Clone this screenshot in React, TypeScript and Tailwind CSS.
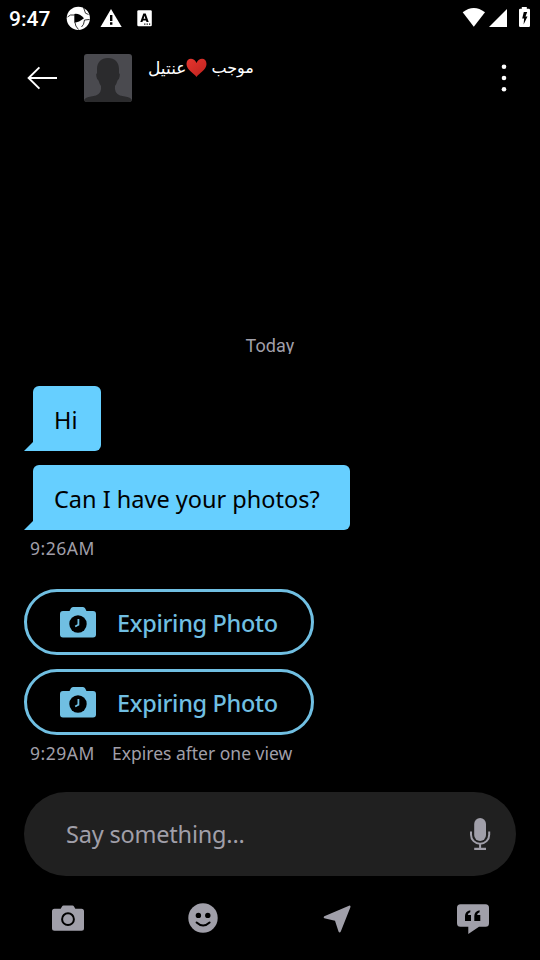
import React from 'react';

const plex = "font-['Noto_Sans','Open_Sans',sans-serif]";

function StatusBar() {
  return (
    <div className="flex h-9 items-center pr-[9px] pl-[9px] font-['Roboto',sans-serif] text-white">
      <span className="w-[57px] pt-px text-[21px] leading-9 font-medium whitespace-nowrap">9:47</span>
      <svg className="h-9 w-[90px]" viewBox="0 0 90 36">
        <circle cx="12.3" cy="18.3" r="11.6" fill="#fff" />
        <g stroke="#000" strokeWidth="0.8" fill="none">
          <path d="M17.500 7.500 L19.500 13.200 L22.500 14.500" />
          <path d="M23.500 19.500 L18.500 20 Q18 25 15.500 27" />
          <path d="M9 22.500 Q9 26 12.500 29.500" />
          <path d="M8.500 15 Q4 14 1.500 17" />
        </g>
        <path d="M8.300 14 Q13 13 18 18.300 Q13 22.500 8.300 22.800 Z" fill="#000" />
        <path d="M45 9 L55.7 27 H34.5 Z" fill="#fff" />
        <path d="M44 15h2.4v6H44zM44 22.3h2.4v2.4H44z" fill="#000" />
        <rect x="71.3" y="10.3" width="14.5" height="16" rx="1.3" fill="#fff" />
        <path d="M77.3 13.5h2.4l3 8.6h-2.2l-.5-1.7h-3l-.6 1.7h-2.1zm.3 5.2h1.800l-.9-3z" fill="#000" fillRule="evenodd" />
        <path d="M78.2 23.5h1.2v1.2h-1.2zM80.6 23.5h1.2v1.2h-1.2zM83 23.5h1.2v1.2H83z" fill="#000" />
      </svg>
      <svg className="ml-auto h-9 w-[70px]" viewBox="0 0 70 36" fill="#fff">
        <path d="M1.7 12.3 Q12.8 3.8 24 12.3 L12.8 26.8 Z" />
        <path d="M46 9 V27 H28 Z" />
        <path fillRule="evenodd" d="M60.8 7h5v1.8h2a1.2 1.2 0 0 1 1.2 1.2v15.800a1.200 1.200 0 0 1-1.200 1.200h-8.600a1.200 1.200 0 0 1-1.200-1.200V10a1.200 1.200 0 0 1 1.200-1.200h1.600zM62.800 12l-1.600 6.500h1.900l-.5 6 3.900-8h-2l1.700-4.500z" />
      </svg>
    </div>
  );
}

function Header() {
  return (
    <header className="flex h-[84px] items-center pr-6 pl-[27px]">
      <svg className="h-6 w-[31px] shrink-0" viewBox="0 0 31 24" fill="none" stroke="#fff" strokeWidth="1.9">
        <path d="M1.6 12 H30 M12.400 1.400 L1.600 12 L12.400 22.600" />
      </svg>
      <svg className="ml-[26px] h-12 w-12 shrink-0 rounded-[3px] bg-[#4a4a4f]" viewBox="0 0 48 48" fill="#2b2b2d">
        <path d="M24 4 C17 4 13 8.500 13 15 V19 Q11.500 20 12.500 23 Q13 26 14.500 26.500 Q15.500 30 17 32 Q18 39 12 41.500 L4.500 43 Q1.500 43.500 0 46 V48 H48 V46 Q46.500 43.500 43.500 43 L36 41.500 Q30 39 31 32 Q32.500 30 33.500 26.500 Q35 26 35.500 23 Q36.500 20 35 19 V15 C35 8.500 31 4 24 4Z" />
      </svg>
      <div className="mb-5 ml-4 flex h-7 items-center font-['DejaVu_Sans',sans-serif] text-[17px] leading-7 text-white" dir="rtl">
        <span className="text-[16px]">موجب</span>
        <svg className="mr-[4px] h-5 w-[21px]" viewBox="0 0 21 20">
          <defs>
            <linearGradient id="heart" x1="0" y1="0" x2="1" y2="1">
              <stop offset="0" stopColor="#e6362f" />
              <stop offset="1" stopColor="#bd211d" />
            </linearGradient>
          </defs>
          <path d="M10.500 19 C8 15 .5 12 .5 6 C.5 -.5 8 -.8 10.500 5 C13 -.8 20.500 -.5 20.500 6 C20.500 12 13 15 10.500 19Z" fill="url(#heart)" />
        </svg>
        <span>عنتيل</span>
      </div>
      <svg className="ml-auto h-[30px] w-6" viewBox="0 0 24 30" fill="#fff">
        <circle cx="12" cy="3.700" r="2.300" />
        <circle cx="12" cy="15" r="2.300" />
        <circle cx="12" cy="26.300" r="2.300" />
      </svg>
    </header>
  );
}

function Bubble({ children, className }: { children: React.ReactNode; className: string }) {
  return (
    <div className="flex h-[65px] items-end">
      <svg className="h-[9px] w-[9px]" viewBox="0 0 9 9">
        <path d="M9 0 V9 H0 Z" fill="#66cfff" />
      </svg>
      <div className={`h-[65px] rounded-[6px] rounded-bl-none bg-[#66cfff] pt-px pl-[21px] text-[23.5px] leading-[66px] whitespace-nowrap text-black ${className}`}>
        {children}
      </div>
    </div>
  );
}

function ExpiringPhoto() {
  return (
    <button className="flex h-[66px] w-[290px] items-center rounded-full border-[3px] border-[#70bfe2] pl-[33px] text-[#70bfe2]">
      <svg className="h-[31px] w-9" viewBox="0 0 36 31">
        <path d="M13 0h10q1.500 0 2.200 1.500L26.500 4H33q3 0 3 3v20.500q0 3-3 3H3q-3 0-3-3V7q0-3 3-3h6.500l1.300-2.500Q11.500 0 13 0z" fill="currentColor" />
        <circle cx="18" cy="17" r="8.700" fill="#000" />
        <path d="M18.400 12v5.700l-3.200 1.800" fill="none" stroke="currentColor" strokeWidth="1.800" />
      </svg>
      <span className="ml-[21px] pt-[2px] text-[23.5px] leading-8 font-medium tracking-[-0.32px] whitespace-nowrap">Expiring Photo</span>
    </button>
  );
}

function Composer() {
  return (
    <div className="mx-6 mt-[22px] flex h-[84px] items-center rounded-full bg-[#202020] pr-6 pl-[42px]">
      <span className="pt-[2px] text-[23.5px] tracking-[-0.2px] text-[#a09fa9]">Say something...</span>
      <svg className="ml-auto h-8 w-6" viewBox="0 0 24 32" fill="#a09fa9">
        <rect x="6.200" y="0" width="11.800" height="23" rx="5.900" />
        <path d="M3 13.500v3.200a9.100 9.100 0 0 0 18.200 0v-3.200" fill="none" stroke="#a09fa9" strokeWidth="2" />
        <path d="M11.100 26h2v4h-2zM6.200 29.700H18V32H6.200z" />
      </svg>
    </div>
  );
}

function Toolbar() {
  return (
    <nav className="grid h-[84px] grid-cols-4 items-center justify-items-center text-[#a09fa9]">
      <svg className="h-8 w-8" viewBox="0 0 32 32">
        <path d="M11.500 3.500h9q1 0 1.500 1l1.300 2.200H29.500q2.500 0 2.500 2.500v17q0 2.500-2.500 2.500h-27Q0 28.700 0 26.200v-17Q0 6.700 2.500 6.700h6.200L10 4.500q.5-1 1.500-1z" fill="currentColor" />
        <circle cx="16" cy="17.200" r="5.900" fill="none" stroke="#000" strokeWidth="2" />
      </svg>
      <svg className="h-8 w-8" viewBox="0 0 32 32">
        <circle cx="16" cy="16" r="14.700" fill="currentColor" />
        <circle cx="11.400" cy="13.400" r="2.700" fill="#000" />
        <circle cx="20.800" cy="13.400" r="2.700" fill="#000" />
        <path d="M9.600 20.500q6.500 6 13 0" fill="none" stroke="#000" strokeWidth="2" strokeLinecap="round" />
      </svg>
      <svg className="h-8 w-8" viewBox="0 0 32 32">
        <path d="M27 3.700q2-.5 1.400 1.500L18.800 29.500q-1.200 2-2.300 0L13 18.800 2.300 16.200q-1.500-.8 0-1.900z" fill="currentColor" />
      </svg>
      <svg className="h-8 w-8" viewBox="0 0 32 32">
        <path d="M3.500 2.300h25Q32 2.300 32 5.800v15.400q0 3.500-3.500 3.500h-6.500L11.300 32v-7.300H3.500Q0 24.700 0 21.200V5.800q0-3.500 3.500-3.500z" fill="currentColor" />
        <path d="M13.300 8.200v2q-2.300.8-2.500 2.800H14v6H8v-5q0-4.500 5.300-5.800zM22.600 8.200v2q-2.300.8-2.500 2.800h3.200v6h-6v-5q0-4.500 5.300-5.800z" fill="#000" />
      </svg>
    </nav>
  );
}

export default function App() {
  return (
    <div className={`flex h-[960px] w-[540px] flex-col overflow-hidden bg-black ${plex}`}>
      <StatusBar />
      <Header />
      <main className="flex h-[650px] flex-col pt-[214px] pl-6">
        <div className="mr-6 h-5 overflow-hidden text-center font-['Roboto',sans-serif] text-[18px] leading-6 tracking-[0.1px] text-[#a09fa9]">Today</div>
        <div className="mt-8 flex flex-col gap-[14px]">
          <Bubble className="w-[68px]">Hi</Bubble>
          <Bubble className="w-[317px]">Can I have your photos?</Bubble>
        </div>
        <p className="mt-[6px] ml-[6px] h-6 text-[17.5px] leading-6 tracking-[0.5px] text-[#a09fa9]">9:26AM</p>
        <div className="mt-[29px] flex flex-col gap-[14px]">
          <ExpiringPhoto />
          <ExpiringPhoto />
        </div>
        <p className="mt-[6px] ml-[6px] flex h-6 text-[17.5px] leading-6 whitespace-nowrap text-[#a09fa9]">
          <span className="w-[82px] tracking-[0.5px]">9:29AM</span>
          <span>Expires after one view</span>
        </p>
      </main>
      <Composer />
      <Toolbar />
    </div>
  );
}
